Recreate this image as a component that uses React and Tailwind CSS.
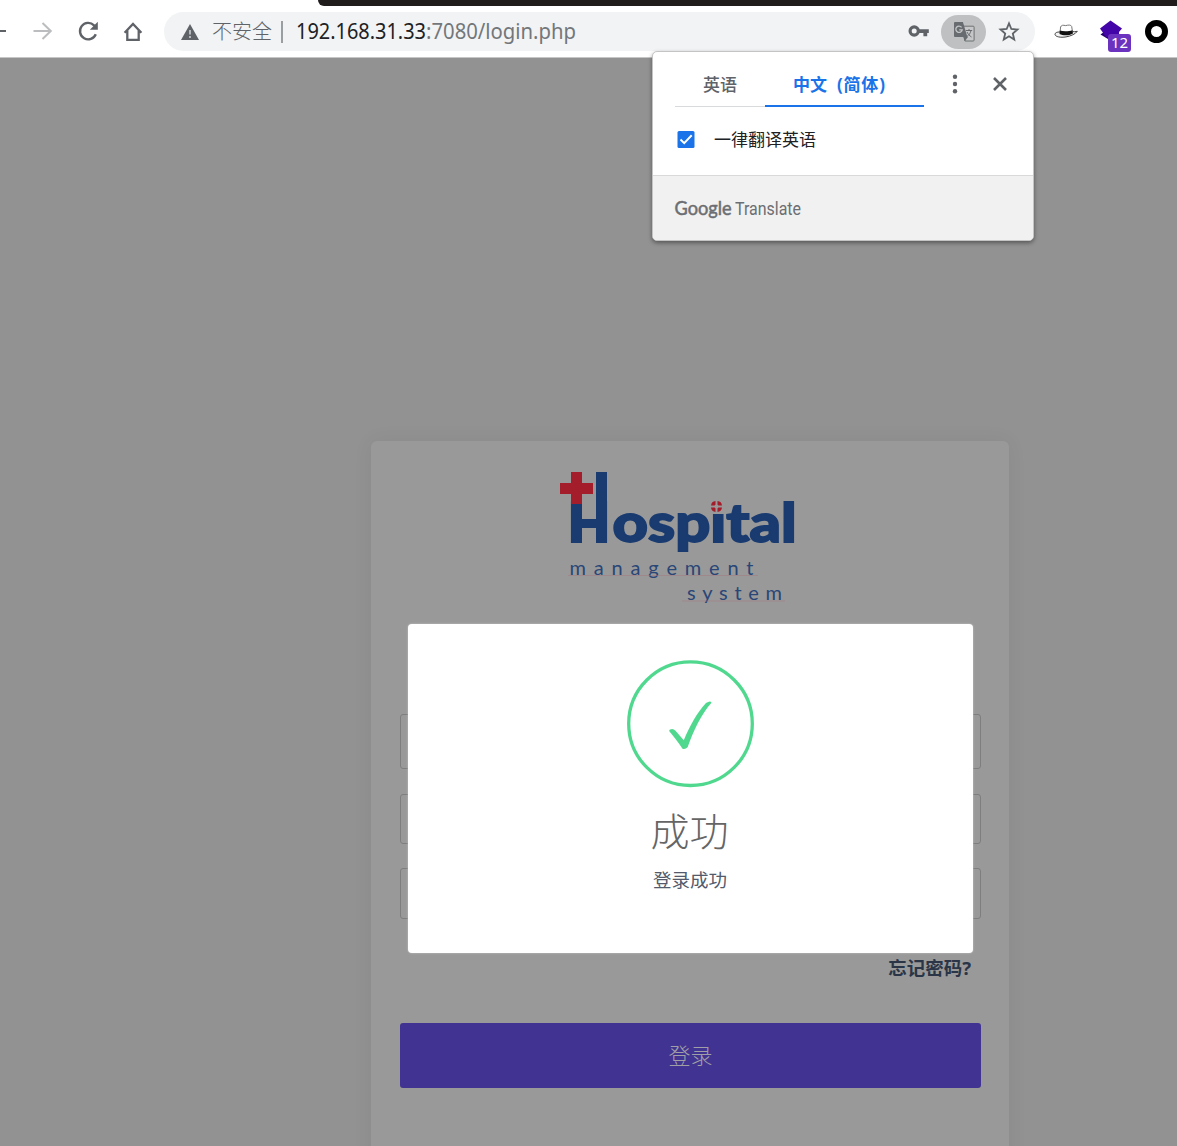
import React from "react";

const cjk = "font-['Noto_Sans','Noto_Sans_CJK_SC',sans-serif]";

function BackIcon() {
  return (
    <svg className="h-6 w-[18px]" viewBox="0 0 18 24" fill="none" stroke="#5f6368" strokeWidth="2">
      <path d="M-8 11H6" />
    </svg>
  );
}

function ForwardIcon() {
  return (
    <svg className="h-6 w-6" viewBox="0 0 24 24" fill="none" stroke="#bbbdbf" strokeWidth="2">
      <path d="M2.500 11H19.500M11.500 3l8.300 8-8.300 8" />
    </svg>
  );
}

function ReloadIcon() {
  return (
    <svg className="h-6 w-6" viewBox="0 0 24 24" fill="none" stroke="#5f6368" strokeWidth="2.4">
      <path d="M19.8 14.200A8.2 8.2 0 1 1 18 5.300l1.7 1.8" />
      <path d="M21.8 1.8v8h-8z" fill="#5f6368" stroke="none" />
    </svg>
  );
}

function HomeIcon() {
  return (
    <svg className="h-6 w-6" viewBox="0 0 24 24" fill="none" stroke="#5f6368" strokeWidth="2.3">
      <path d="M3.6 12.700L12 3.900l8.4 8.800M6.3 10.500v9.300h11.4v-9.300" />
    </svg>
  );
}

function WarningIcon() {
  return (
    <svg className="h-[18px] w-[20px]" viewBox="0 0 20 18">
      <path d="M10 1L19 17H1z" fill="#5f6368" />
      <path d="M9 7h2v4.500H9zM9 13h2v2H9z" fill="#b5b8ba" />
    </svg>
  );
}

function KeyIcon() {
  return (
    <svg className="h-[14px] w-[22px]" viewBox="0 0 22 14">
      <circle cx="6.2" cy="6" r="4.1" fill="none" stroke="#5f6368" strokeWidth="3.2" />
      <path d="M10 4.300h10.800v3.600h-1.6v3.400h-3.8V7.900H10z" fill="#5f6368" />
    </svg>
  );
}

function TranslateIcon() {
  return (
    <svg className="h-[22px] w-[22px]" viewBox="0 0 22 22">
      <path d="M8.5 5.2h11.7a.9.9 0 0 1 .9.9v13a.9.9 0 0 1-.9.9H12z" fill="#c6c7c8" stroke="#6d7073" strokeWidth="1" />
      <path d="M1.900 1h8l4.500 15H1.900A.9.9 0 0 1 1 15.100V1.900A.9.9 0 0 1 1.900 1z" fill="#686b6f" />
      <path d="M10.500 16h4.500l-3.300 4.300z" fill="#686b6f" />
      <path d="M8.600 6.300A3.200 3.200 0 1 0 9.200 8.800H6.200" fill="none" stroke="#c3c4c5" strokeWidth="1.3" />
      <path d="M12.800 9.500h6.400M16 8v1.500M18 9.500c-.5 2.500-2 4.500-4 6M14 11c1 2.200 2.500 3.600 4.500 5" fill="none" stroke="#686b6f" strokeWidth="1" />
    </svg>
  );
}

function StarIcon() {
  return (
    <svg className="h-6 w-6" viewBox="0 0 24 24" fill="none" stroke="#5f6368" strokeWidth="1.8">
      <path d="M12 3.300l2.350 5.700 6.100.5-4.650 4 1.450 6-5.250-3.200-5.250 3.200 1.450-6-4.650-4 6.100-.5z" />
    </svg>
  );
}

function HatIcon() {
  return (
    <svg className="h-[18px] w-6" viewBox="0 0 24 18">
      <path d="M6 9C3 8.800.8 9.800 1 11.500c.4 2.300 5.500 3.300 11 2.400 5-.8 9.500-3 11.300-5.600-2 .5-3.300.5-4.800.3" fill="#f3f3f3" stroke="#444" strokeWidth="1" />
      <path d="M6 9.500L6.600 4c.8-2 2.500-2 5-1.400C14 2 17 1.500 17.700 3.500l.8 5.500c-3 2.200-9 2.700-12.500.5z" fill="#fff" stroke="#777" strokeWidth="1" />
      <path d="M5.800 7.500c3.600 1.200 9 1 12.600-.3l.6 3.200c-4 2.400-9.600 2.600-13.500.6z" fill="#111" />
    </svg>
  );
}

function CubeIcon() {
  return (
    <svg className="h-6 w-6" viewBox="0 0 24 24">
      <path d="M1.500 14.500l4-3 9 4-3 5z" fill="#270070" />
      <path d="M11.500 0.500l11.500 8-3 3.500v5H7l-6-8.500z" fill="#4304a8" />
    </svg>
  );
}

function TranslatePopup() {
  return (
    <div className="absolute left-[652px] top-[51px] z-20 flex h-[190px] w-[382px] flex-col overflow-hidden rounded-[5px] border border-[#c4c4c4] bg-white shadow-[0_2px_4px_rgba(0,0,0,0.4)]">
      <div className="flex h-[55px] pl-[22px] text-[17px] font-bold leading-6">
        <div className="flex w-[90px] justify-center border-b border-[#d9dadb] pt-[21px] font-medium text-[#5f6368]">英语</div>
        <div className="flex w-[159px] border-b-2 border-[#1a73e8] pl-7 pt-[21px] text-[#1a73e8]">
          <span className="whitespace-nowrap">中文</span>
          <span className="ml-[10px] whitespace-nowrap tracking-[0.8px]">(简体)</span>
        </div>
        <svg className="ml-[19px] mt-[20px] h-6 w-6" viewBox="0 0 24 24" fill="#5f6368">
          <circle cx="12" cy="4.700" r="2.200" /><circle cx="12" cy="12" r="2.200" /><circle cx="12" cy="19.300" r="2.200" />
        </svg>
        <svg className="ml-[21px] mt-[20px] h-6 w-6" viewBox="0 0 24 24" fill="none" stroke="#5f6368" strokeWidth="2.600">
          <path d="M6 6l12 12M18 6L6 18" />
        </svg>
      </div>
      <div className="flex h-[68px] items-center gap-[19px] pb-[2px] pl-6 text-[17px] text-[#202124]">
        <svg className="h-[18px] w-[18px]" viewBox="0 0 18 18">
          <rect x="0.500" y="0" width="17" height="17" rx="1.500" fill="#1a73e8" />
          <path d="M3.500 8.500l3.700 3.600 7.500-7.800" fill="none" stroke="#fff" strokeWidth="2" />
        </svg>
        <span className="whitespace-nowrap">一律翻译英语</span>
      </div>
      <div className="flex flex-1 items-center border-t border-[#d9d9d9] bg-[#f1f1f1] pl-[21px]">
        <svg className="h-7 w-[220px]" viewBox="0 0 220 28" fill="#6b6e73" fontFamily="Lato, sans-serif">
          <text x="0.500" y="20.500" fontSize="18.500" fontWeight="400" stroke="#6b6e73" strokeWidth="0.500" textLength="57" lengthAdjust="spacingAndGlyphs">Google</text>
          <text x="61" y="20.500" fontSize="17.500" fontFamily="Roboto, sans-serif" textLength="66" lengthAdjust="spacingAndGlyphs">Translate</text>
        </svg>
      </div>
    </div>
  );
}

function BrowserBar() {
  return (
    <header className="relative h-[58px] border-b border-[#c6c6c6] bg-white">
      <div className="ml-[318px] h-[6px] rounded-bl-[12px] bg-[#1f1c1b]" />
      <div className="flex h-[51px] items-center">
        <BackIcon />
        <div className="ml-[13px] flex gap-[21px]">
          <ForwardIcon />
          <ReloadIcon />
          <HomeIcon />
        </div>
        <div className="ml-[19px] flex h-[39px] w-[871px] items-center rounded-full bg-[#f1f3f4] pl-4">
          <WarningIcon />
          <span className="ml-[12px] w-[61px] whitespace-nowrap text-[20px] font-light text-[#5f6368]">不安全</span>
          <span className="ml-[8px] h-[22px] w-[2px] bg-[#9b9ea1]" />
          <svg className="ml-[12px] h-[30px] w-[330px]" viewBox="0 0 330 30" fontFamily="'Noto Sans', sans-serif" fontSize="21">
            <text x="1" y="22" fill="#202124" textLength="130" lengthAdjust="spacingAndGlyphs">192.168.31.33</text>
            <text x="131" y="22" fill="#73777b" textLength="150" lengthAdjust="spacingAndGlyphs">:7080/login.php</text>
          </svg>
          <div className="ml-auto flex items-center pr-[14px]">
            <KeyIcon />
            <span className="ml-[11px] flex h-[34px] w-[45px] items-center justify-center rounded-full bg-[#bfc0c1]">
              <TranslateIcon />
            </span>
            <span className="ml-[11px]"><StarIcon /></span>
          </div>
        </div>
        <div className="ml-[19px] flex items-center">
          <HatIcon />
          <div className="relative ml-[21px]">
            <CubeIcon />
            <span className="absolute left-[9px] top-[14px] flex h-[18px] w-[23px] items-center justify-center rounded-[3px] bg-[#6b32bf] font-['Noto_Sans',sans-serif] text-[15px] text-white">12</span>
          </div>
          <span className="ml-[22px] h-[23px] w-[23px] rounded-full border-[6px] border-black bg-white" />
        </div>
      </div>
      <TranslatePopup />
    </header>
  );
}

function HospitalLogo() {
  return (
    <svg className="h-[140px] w-[244px]" viewBox="556 468 244 140">
      <g fill="#193b70" fontFamily="Lato, sans-serif" fontWeight="900">
        <text x="566.500" y="543" fontSize="57" textLength="45" lengthAdjust="spacingAndGlyphs">H</text>
        <rect x="596" y="472" width="11" height="71" />
        <rect x="571" y="502" width="11" height="41" />
        <rect x="581" y="519" width="16" height="9" />
        <text x="612.500" y="541.500" fontSize="53" stroke="#193b70" strokeWidth="1.800" textLength="184" lengthAdjust="spacingAndGlyphs">ospital</text>
      </g>
      <path d="M571 472h11v11h11v11h-11v10h-11v-10h-11v-11h11z" fill="#a41d2b" />
      <rect x="709" y="499" width="16" height="15" fill="#999999" />
      <path d="M711 505.500a5 5 0 0 1 4.500-4.500v4.500zM717.500 501a5 5 0 0 1 4.500 4.500h-4.500zM711 507.500a5 5 0 0 0 4.500 4.500v-4.500zM717.500 512a5 5 0 0 0 4.500-4.500h-4.500z" fill="#a41d2b" />
      <circle cx="716.500" cy="506.500" r="2" fill="#999999" />
      <g fill="#294677" fontFamily="Lato, sans-serif" fontSize="20">
        <text x="569.500" y="574.500" textLength="184" lengthAdjust="spacing">management</text>
        <text x="687" y="600" textLength="95" lengthAdjust="spacing">system</text>
      </g>
      <path d="M568 575.500h190M682 601h103" stroke="#a4777f" strokeWidth="0.500" />
    </svg>
  );
}

function SuccessDialog() {
  return (
    <div className="absolute left-[37px] top-[183px] flex h-[329px] w-[565px] flex-col items-center rounded-[4px] bg-white pt-[36px] shadow-[0_0_2px_#ccc]">
      <svg className="h-[128px] w-[128px]" viewBox="0 0 128 128" fill="none" stroke="#51d88f">
        <circle cx="63.500" cy="63.700" r="61.800" strokeWidth="3.300" />
        <path d="M42.500 71.500Q41.500 69.500 44.200 69.200Q46.500 68.700 48.500 70.800L56.800 80.300C62.500 66.500 70 52.500 79 43Q83.500 40 84.500 42.700C74.700 53.500 66.400 70.600 60.700 87Q58.500 89.700 55.500 88.800C51.500 82.700 47.300 77 42.500 71.500Z" fill="#51d88f" stroke="none" />
      </svg>
      <h2 className="mt-[14px] -ml-[2px] whitespace-nowrap text-[39px] font-light leading-[58px] text-[#656565]">成功</h2>
      <p className="-ml-px mt-[6px] whitespace-nowrap text-[18.500px] leading-7 text-[#525a6b]">登录成功</p>
    </div>
  );
}

export default function App() {
  return (
    <div className={`${cjk} h-[1146px] w-[1177px] overflow-hidden bg-[#929292]`}>
      <BrowserBar />
      <main className="flex h-[1088px] pl-[371px] pt-[383px]">
        <section className="relative flex h-[760px] w-[638px] flex-col rounded-t-[6px] bg-[#999999] px-[29px] shadow-[0_0_20px_rgba(0,0,0,0.06)]">
          <div className="ml-[156px] mt-[27px] h-[140px]"><HospitalLogo /></div>
          <div className="mt-[106px] h-[55px] w-[581px] shrink-0 rounded-[3px] border border-[#7e7e7e]" />
          <div className="mt-[25px] h-[50px] w-[581px] shrink-0 rounded-[3px] border border-[#7e7e7e]" />
          <div className="mt-[24px] h-[51px] w-[581px] shrink-0 rounded-[3px] border border-[#7e7e7e]" />
          <a className="mt-[35px] self-end pr-[9px] text-[18.500px] font-bold leading-7 text-[#2a3547]">忘记密码?</a>
          <button className="mt-[41px] flex h-[65px] w-[581px] items-center justify-center rounded-[3px] bg-[#413391] text-[22px] font-light text-[#a09fa5]">登录</button>
          <SuccessDialog />
        </section>
      </main>
    </div>
  );
}
